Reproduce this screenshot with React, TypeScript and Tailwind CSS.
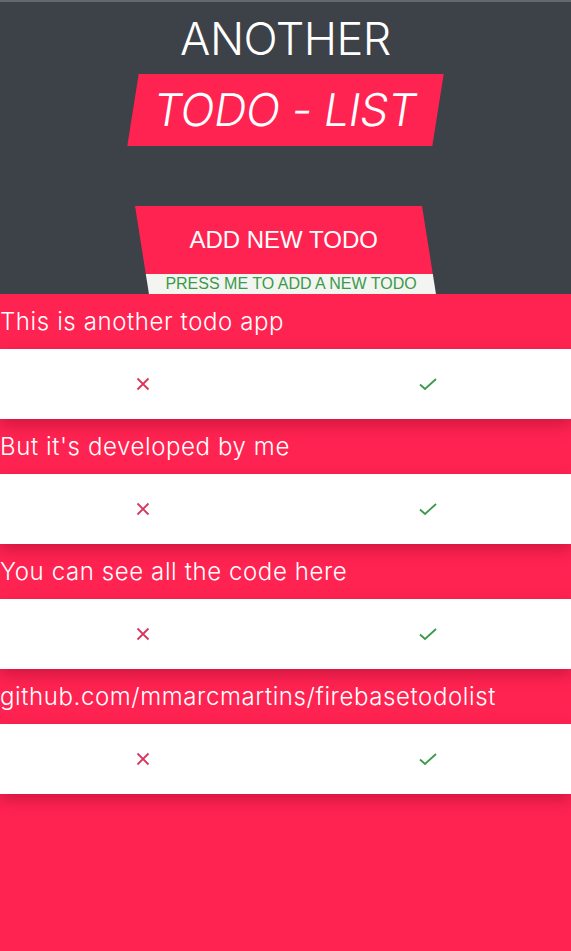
import React from "react";

const todos = [
  "This is another todo app",
  "But it's developed by me",
  "You can see all the code here",
  "github.com/mmarcmartins/firebasetodolist",
];

const CrossIcon = () => (
  <svg width="16" height="16" viewBox="0 0 16 16" fill="none">
    <path d="M2.5 2.5 L13.5 13.5 M13.5 2.5 L2.5 13.5" stroke="#d8365c" strokeWidth="1.8" />
  </svg>
);

const CheckIcon = () => (
  <svg width="20" height="16" viewBox="0 0 20 16" fill="none">
    <path d="M2 8.5 L7 13 L18 3" stroke="#3a9a4c" strokeWidth="1.8" />
  </svg>
);

const App: React.FC = () => {
  return (
    <div className="min-h-screen bg-[#ff2352] font-['Inter','Noto_Sans',sans-serif]">
      {/* Header */}
      <header className="h-[294px] bg-[#3d4148] border-t-2 border-[#66686d] flex flex-col items-center overflow-hidden">
        <h1 className="mt-[7px] text-[45px] leading-[60px] font-light text-white tracking-[-0.5px]">
          ANOTHER
        </h1>
        <div className="mt-[5px] w-[305px] h-[72px] bg-[#ff2352] -skew-x-[9deg] flex items-center justify-center">
          <span className="text-[45px] font-light text-white tracking-[-0.5px]">TODO - LIST</span>
        </div>

        {/* Add button */}
        <button className="mt-[60px] w-[287px] h-[88px] skew-x-[9deg] flex flex-col cursor-pointer">
          <div className="h-[68px] bg-[#ff2352] flex items-center justify-center">
            <span className="-skew-x-[9deg] font-['Liberation_Sans',Arial,sans-serif] text-[24px] text-white">
              ADD NEW TODO
            </span>
          </div>
          <div className="h-[20px] bg-[#f4f5f1] flex items-center justify-center">
            <span className="-skew-x-[9deg] font-['Liberation_Sans',Arial,sans-serif] text-[16px] leading-none text-[#3a9a4c]">
              PRESS ME TO ADD A NEW TODO
            </span>
          </div>
        </button>
      </header>

      {/* Todo list */}
      <ul>
        {todos.map((todo) => (
          <li key={todo}>
            <div className="h-[55px] flex items-center text-[24px] font-light text-white tracking-[0.6px]">
              {todo}
            </div>
            <div className="relative z-10 h-[70px] bg-white grid grid-cols-2 shadow-[0_6px_14px_rgba(120,0,30,0.35)]">
              <div className="flex items-center justify-center">
                <CrossIcon />
              </div>
              <div className="flex items-center justify-center">
                <CheckIcon />
              </div>
            </div>
          </li>
        ))}
      </ul>
    </div>
  );
};

export default App;
